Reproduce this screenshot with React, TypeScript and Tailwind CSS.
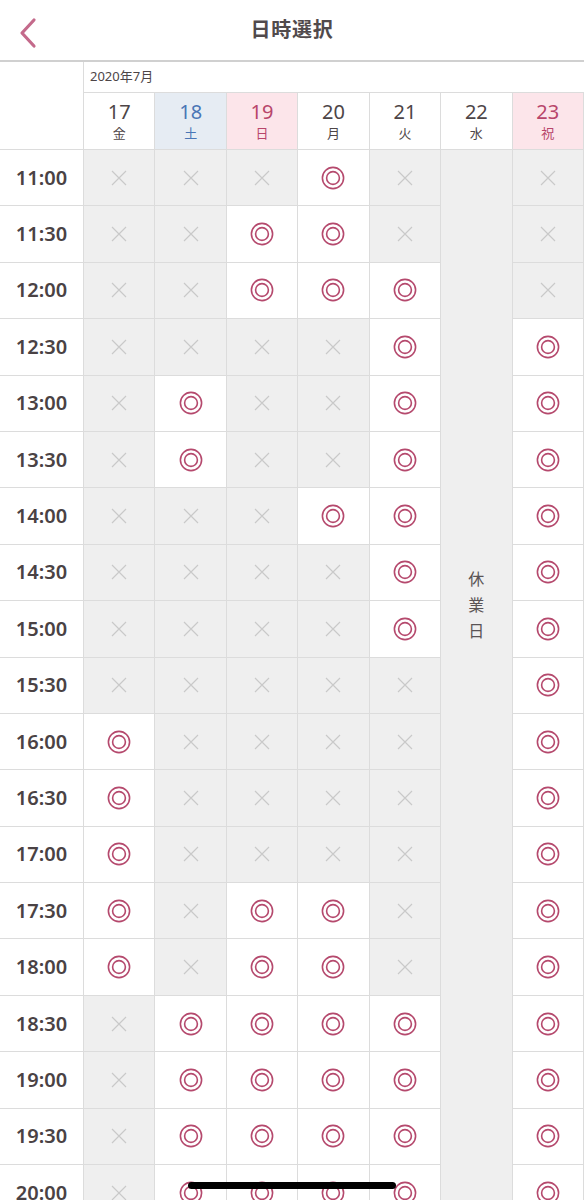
import React from 'react';

const days = [
  { d: '17', w: '金', kind: 'normal' },
  { d: '18', w: '土', kind: 'sat' },
  { d: '19', w: '日', kind: 'sun' },
  { d: '20', w: '月', kind: 'normal' },
  { d: '21', w: '火', kind: 'normal' },
  { d: '22', w: '水', kind: 'normal' },
  { d: '23', w: '祝', kind: 'sun' },
];

// columns: 17, 18, 19, 20, 21, 23 (22 is closed)
const rows: [string, string][] = [
  ['11:00', 'xxxoxx'],
  ['11:30', 'xxooxx'],
  ['12:00', 'xxooox'],
  ['12:30', 'xxxxoo'],
  ['13:00', 'xoxxoo'],
  ['13:30', 'xoxxoo'],
  ['14:00', 'xxxooo'],
  ['14:30', 'xxxxoo'],
  ['15:00', 'xxxxoo'],
  ['15:30', 'xxxxxo'],
  ['16:00', 'oxxxxo'],
  ['16:30', 'oxxxxo'],
  ['17:00', 'oxxxxo'],
  ['17:30', 'oxooxo'],
  ['18:00', 'oxooxo'],
  ['18:30', 'xooooo'],
  ['19:00', 'xooooo'],
  ['19:30', 'xooooo'],
  ['20:00', 'xooooo'],
  ['20:30', 'xooooo'],
];

const Circle = () => (
  <svg width="24" height="24" viewBox="0 0 24 24" fill="none" stroke="#b5496d" strokeWidth="1.6">
    <circle cx="12" cy="12" r="10.6" />
    <circle cx="12" cy="12" r="6.4" />
  </svg>
);

const Cross = () => (
  <svg width="18" height="18" viewBox="0 0 18 18" fill="none" stroke="#c9c9c9" strokeWidth="1.2">
    <path d="M2 2 L16 16 M16 2 L2 16" />
  </svg>
);

const Slot = ({ v }: { v: string }) => (
  <div
    className={
      'h-[56.4px] flex items-center justify-center border-r border-b border-[#dcdcdc] ' +
      (v === 'o' ? 'bg-white' : 'bg-[#efefef]')
    }
  >
    {v === 'o' ? <Circle /> : <Cross />}
  </div>
);

export default function App() {
  return (
    <div
      className="relative w-[584px] h-[1200px] overflow-hidden bg-white text-[#4d4547]"
      style={{ fontFamily: '"Noto Sans", "Noto Sans CJK JP", sans-serif' }}
    >
      {/* header */}
      <div className="relative h-[62px] flex items-center justify-center border-b-2 border-[#d0d0d0]">
        <button className="absolute left-[14px] top-[13px] p-1" aria-label="戻る">
          <svg width="20" height="32" viewBox="0 0 20 32" fill="none" stroke="#c46a8b" strokeWidth="3.2" strokeLinecap="round" strokeLinejoin="round">
            <path d="M16 3 L4 16 L16 29" />
          </svg>
        </button>
        <h1 className="text-[20px] font-bold tracking-[0.04em] text-[#514a4c]">日時選択</h1>
      </div>

      {/* column header */}
      <div className="grid grid-cols-[84px_repeat(7,1fr)] border-b border-[#dcdcdc]">
        <div className="row-span-2 border-r border-[#dcdcdc]" />
        <div className="col-span-7 h-[31px] flex items-center pl-[6px] text-[13px] border-b border-[#dcdcdc]">
          2020年7月
        </div>
        {days.map((d) => {
          const bg = d.kind === 'sat' ? 'bg-[#e6ecf3]' : d.kind === 'sun' ? 'bg-[#fce5ea]' : 'bg-white';
          const fg = d.kind === 'sat' ? 'text-[#4a76b6]' : d.kind === 'sun' ? 'text-[#b8456b]' : 'text-[#4d4547]';
          return (
            <div key={d.d} className={'h-[56px] flex flex-col items-center justify-center border-r border-[#dcdcdc] ' + bg + ' ' + fg}>
              <span className="text-[20px] leading-[24px]">{d.d}</span>
              <span className="text-[13px] leading-[18px]">{d.w}</span>
            </div>
          );
        })}
      </div>

      {/* body */}
      <div className="grid grid-cols-[84px_repeat(7,1fr)]">
        {rows.map(([t, v], i) => (
          <React.Fragment key={t}>
            <div className="h-[56.4px] flex items-center justify-center border-r border-b border-[#dcdcdc] text-[20px] font-semibold text-[#4a4244]">
              {t}
            </div>
            {v.slice(0, 5).split('').map((c, j) => (
              <Slot key={j} v={c} />
            ))}
            {i === 0 && (
              <div className="row-span-20 bg-[#efefef] border-r border-[#dcdcdc] flex flex-col items-center pt-[416px] text-[16px] leading-[26px] text-[#5a5456]">
                <span>休</span>
                <span>業</span>
                <span>日</span>
              </div>
            )}
            <Slot v={v[5]} />
          </React.Fragment>
        ))}
      </div>

      {/* home indicator */}
      <div className="absolute left-[188px] top-[1182px] w-[208px] h-[7px] rounded-full bg-black" />
    </div>
  );
}
